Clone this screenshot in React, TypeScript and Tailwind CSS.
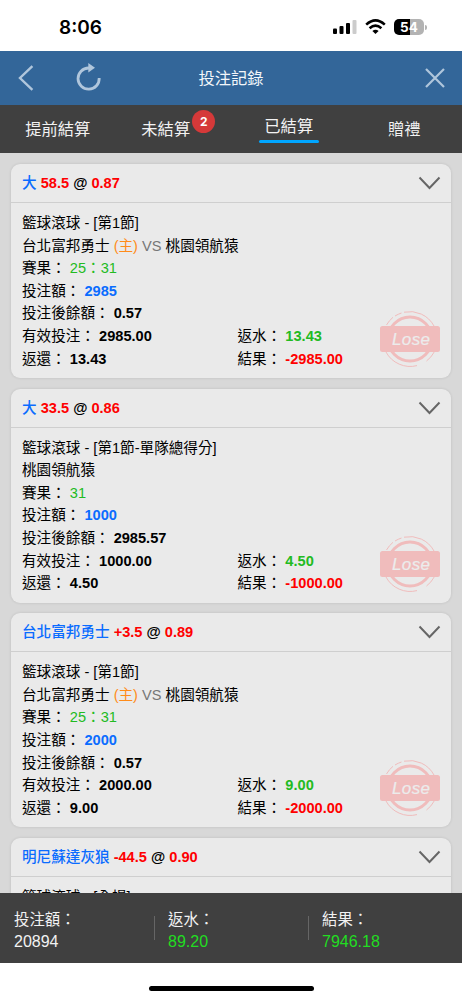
import React from "react";

interface Bet {
  pick: string;
  line: string;
  odds: string;
  market: string;
  details?: {
    home?: string;
    away: string;
    score: string;
    stake: string;
    balance: string;
    valid: string;
    rebate: string;
    returned: string;
    result: string;
  };
}

const bets: Bet[] = [
  {
    pick: "大",
    line: "58.5",
    odds: "0.87",
    market: "籃球滾球 - [第1節]",
    details: {
      home: "台北富邦勇士",
      away: "桃園領航猿",
      score: "25：31",
      stake: "2985",
      balance: "0.57",
      valid: "2985.00",
      rebate: "13.43",
      returned: "13.43",
      result: "-2985.00",
    },
  },
  {
    pick: "大",
    line: "33.5",
    odds: "0.86",
    market: "籃球滾球 - [第1節-單隊總得分]",
    details: {
      away: "桃園領航猿",
      score: "31",
      stake: "1000",
      balance: "2985.57",
      valid: "1000.00",
      rebate: "4.50",
      returned: "4.50",
      result: "-1000.00",
    },
  },
  {
    pick: "台北富邦勇士",
    line: "+3.5",
    odds: "0.89",
    market: "籃球滾球 - [第1節]",
    details: {
      home: "台北富邦勇士",
      away: "桃園領航猿",
      score: "25：31",
      stake: "2000",
      balance: "0.57",
      valid: "2000.00",
      rebate: "9.00",
      returned: "9.00",
      result: "-2000.00",
    },
  },
  {
    pick: "明尼蘇達灰狼",
    line: "-44.5",
    odds: "0.90",
    market: "籃球滾球 - [全場]",
  },
];

const StatusBar: React.FC = () => (
  <div className="flex h-[51px] shrink-0 items-start justify-between bg-white pl-[59px] pr-[35px] pt-[17px]">
    <span className="font-['Inter'] text-[19px] font-semibold leading-[22px] text-black">
      8:06
    </span>
    <div className="flex items-center pt-[2px]">
      <svg width="24" height="16" viewBox="0 0 24 16">
        <rect x="0" y="9.5" width="4" height="5.5" rx="1" fill="#000" />
        <rect x="6.5" y="7" width="4" height="8" rx="1" fill="#000" />
        <rect x="13" y="4" width="4" height="11" rx="1" fill="#000" />
        <rect x="19.5" y="1" width="4" height="14" rx="1" fill="#ccc" />
      </svg>
      <svg className="ml-2" width="21" height="16" viewBox="0 0 21 16" fill="none" stroke="#000">
        <path d="M1.2 5.6Q10.5 -2.8 19.8 5.6" strokeWidth="2.6" />
        <path d="M4.6 9.2Q10.5 4 16.4 9.2" strokeWidth="2.6" />
        <path d="M10.5 15L7.4 12Q10.5 9.4 13.6 12Z" fill="#000" stroke="none" />
      </svg>
      <div className="ml-2 flex h-4 w-[30px] items-center justify-center rounded-[5px] bg-linear-to-r from-black from-54% to-[#b3b3b3] to-54% font-['Inter'] text-[13.5px] font-bold text-white">
        54
      </div>
      <div className="ml-px h-[5px] w-[2px] rounded-r-full bg-[#b3b3b3]" />
    </div>
  </div>
);

const TitleBar: React.FC = () => (
  <div className="grid h-[54px] shrink-0 grid-cols-3 items-center bg-[#336699] text-[#b0c6dc]">
    <div className="flex items-center pl-[18px]">
      <svg width="16" height="26" viewBox="0 0 16 26" fill="none" stroke="currentColor" strokeWidth="2.4">
        <path d="M14.4 1.2L2 13L14.4 24.8" />
      </svg>
      <svg className="ml-[41px]" width="28" height="30" viewBox="0 0 28 30">
        <path
          d="M24.2 15A10.6 10.6 0 1 1 13.6 5H15"
          fill="none"
          stroke="currentColor"
          strokeWidth="2.8"
        />
        <path d="M13.3 0L20 4.8L13.3 9.4Z" fill="currentColor" />
      </svg>
    </div>
    <div className="text-center text-[16.3px] leading-6 text-[#f2f6fa]">投注記錄</div>
    <div className="flex justify-end pr-[17px]">
      <svg width="20" height="20" viewBox="0 0 20 20" stroke="currentColor" strokeWidth="2.2">
        <path d="M1 1L19 19M19 1L1 19" />
      </svg>
    </div>
  </div>
);

const Tabs: React.FC = () => (
  <div className="grid h-12 shrink-0 grid-cols-4 bg-[#404040] text-center text-[16.3px] leading-6 text-[#f2f2f2]">
    <div className="pt-3">提前結算</div>
    <div className="pr-[15px] pt-3">
      <span className="relative inline-block">
        未結算
        <span className="absolute -right-[25px] -top-[7px] h-[23px] w-[23px] rounded-full bg-[#d53939] font-['Inter'] text-xs font-bold leading-[23px] text-white">
          2
        </span>
      </span>
    </div>
    <div className="flex flex-col items-center pt-[9px]">
      已結算
      <div className="mt-[2px] h-[3px] w-[60px] rounded-full bg-[#00a6ff]" />
    </div>
    <div className="pt-3">贈禮</div>
  </div>
);

const LoseStamp: React.FC = () => (
  <svg className="absolute bottom-[10px] right-[10px]" width="62" height="58" viewBox="0 0 62 58">
    <g fill="none" stroke="#f0bcbc">
      <circle cx="31" cy="29" r="22" strokeWidth="3" />
      <path d="M25 2.2A27.5 27.5 0 0 1 55 16M7.5 15A27.5 27.5 0 0 1 14 7.3M16 6A27.5 27.5 0 0 1 22.5 3" />
      <path d="M7 42A27.5 27.5 0 0 0 38 55.6M47.5 51A27.5 27.5 0 0 0 55.2 42" />
    </g>
    <rect x="1" y="16" width="60" height="26" rx="2.5" fill="#f0bcbc" />
    <text
      x="32.2"
      y="35"
      textAnchor="middle"
      fontFamily="Liberation Sans, sans-serif"
      fontSize="17"
      fontStyle="italic"
      letterSpacing="0.4"
      fill="#ececec"
      stroke="#ececec"
      strokeWidth="0.2"
    >
      Lose
    </text>
  </svg>
);

const BetDetails: React.FC<{ details: NonNullable<Bet["details"]> }> = ({ details }) => (
  <>
    <div>
      {details.home && (
        <>
          {details.home} <span className="text-[#ff8c1a]">(主)</span>{" "}
          <span className="text-[#777]">VS</span>{" "}
        </>
      )}
      {details.away}
    </div>
    <div>
      賽果： <span className="text-[#22bb22]">{details.score}</span>
    </div>
    <div>
      投注額： <b className="text-[#0a6cff]">{details.stake}</b>
    </div>
    <div>
      投注後餘額： <b>{details.balance}</b>
    </div>
    <div className="grid grid-cols-[215.5px_1fr]">
      <div>
        有效投注： <b>{details.valid}</b>
      </div>
      <div>
        返水： <b className="text-[#22bb22]">{details.rebate}</b>
      </div>
      <div>
        返還： <b>{details.returned}</b>
      </div>
      <div>
        結果： <b className="text-[#ff0000]">{details.result}</b>
      </div>
    </div>
    <LoseStamp />
  </>
);

const BetCard: React.FC<{ bet: Bet }> = ({ bet }) => (
  <div className="relative h-[214px] shrink-0 overflow-hidden rounded-[9px] bg-[#eaeaea] shadow-[0_0_3px_rgba(0,0,0,0.12)]">
    <div className="flex h-[39px] items-center justify-between border-b border-[#cfcfcf] pl-[11px] pr-[10px] font-bold">
      <div className="pt-[2px]">
        <span className="font-medium text-[#0a6cff]">{bet.pick}</span>{" "}
        <span className="text-[#ff0000]">{bet.line}</span> @{" "}
        <span className="text-[#ff0000]">{bet.odds}</span>
      </div>
      <svg width="23" height="14" viewBox="0 0 23 14" fill="none" stroke="#666" strokeWidth="2">
        <path d="M1.5 1.5L11.5 12L21.5 1.5" />
      </svg>
    </div>
    <div className="px-[11px] pt-[9px] leading-[22.6px]">
      <div>{bet.market}</div>
      {bet.details && <BetDetails details={bet.details} />}
    </div>
  </div>
);

const Summary: React.FC = () => (
  <div className="flex h-[70px] shrink-0 items-center bg-[#404040] text-[16px] leading-[22px] text-[#f2f2f2]">
    <div className="w-[154px] pl-[14px] pt-[6px]">
      <div className="text-[15.4px]">投注額：</div>
      <div>20894</div>
    </div>
    <div className="h-6 w-px bg-[#666]" />
    <div className="w-[153px] pl-[13px] pt-[6px]">
      <div className="text-[15.4px]">返水：</div>
      <div className="text-[#22dd22]">89.20</div>
    </div>
    <div className="h-6 w-px bg-[#666]" />
    <div className="pl-[13px] pt-[6px]">
      <div className="text-[15.4px]">結果：</div>
      <div className="text-[#22dd22]">7946.18</div>
    </div>
  </div>
);

export default function App() {
  return (
    <div className="flex h-[1000px] w-[462px] flex-col overflow-hidden bg-[#d8d8d8] font-['Liberation_Sans','Noto_Sans_CJK_TC',sans-serif] text-[14.6px] text-black">
      <StatusBar />
      <TitleBar />
      <Tabs />
      <div className="flex min-h-0 flex-1 flex-col gap-[10.6px] overflow-hidden px-[11px] pt-[11px]">
        {bets.map((bet, i) => (
          <BetCard key={i} bet={bet} />
        ))}
      </div>
      <Summary />
      <div className="flex h-[37px] shrink-0 justify-center bg-white pt-[23px]">
        <div className="h-[5px] w-[165px] rounded-full bg-black" />
      </div>
    </div>
  );
}
